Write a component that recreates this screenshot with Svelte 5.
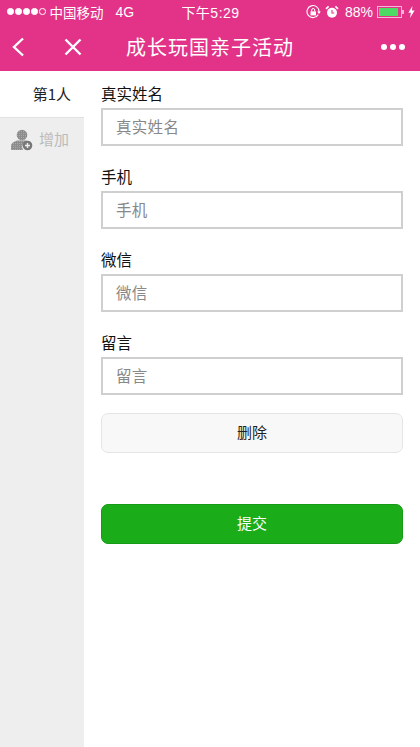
<script>
	let fields = ["真实姓名", "手机", "微信", "留言"];
</script>

<div class="page">
	<header class="top">
		<div class="status">
			<div class="status-left">
				<span class="dots">
					<i></i><i></i><i></i><i></i><i class="off"></i>
				</span>
				<span class="carrier">中国移动</span>
				<span class="net">4G</span>
			</div>
			<div class="clock">下午5:29</div>
			<div class="status-right">
				<svg width="15" height="14" viewBox="0 0 15 14">
					<path d="M12.2 9.6A6 6 0 1 1 13 7" fill="none" stroke="#fff" stroke-width="1.1" />
					<path d="M11.2 6.600h3.600L13 9z" fill="#fff" />
					<rect x="4.500" y="6.400" width="5.500" height="4" fill="#fff" />
					<path d="M5.700 6.400V5a1.500 1.500 0 0 1 3 0v1.400" fill="none" stroke="#fff" stroke-width="1" />
				</svg>
				<svg class="alarm" width="14" height="14" viewBox="0 0 14 14">
					<circle cx="7" cy="7.800" r="5" fill="#fff" />
					<path d="M7 5v3h2.200" fill="none" stroke="#e33389" stroke-width="1.100" />
					<path d="M1 3.800L3.600 1.400M13 3.800L10.400 1.400" stroke="#fff" stroke-width="1.600" />
				</svg>
				<span class="pct">88%</span>
				<span class="battery"><span class="level"></span></span>
				<span class="nub"></span>
				<svg class="bolt" width="7" height="12" viewBox="0 0 7 12">
					<path d="M4.400 0L0.400 6.800h2.500L2 12l4.600-7.400H3.900z" fill="#fff" />
				</svg>
			</div>
		</div>
		<nav class="nav">
			<button class="icon-btn back" aria-label="back">
				<svg width="14" height="20" viewBox="0 0 14 20">
					<path d="M12 1.500L3 10l9 8.500" fill="none" stroke="#fff" stroke-width="2.400" />
				</svg>
			</button>
			<button class="icon-btn close" aria-label="close">
				<svg width="18" height="18" viewBox="0 0 18 18">
					<path d="M1.500 1.500l15 15M16.500 1.500l-15 15" fill="none" stroke="#fff" stroke-width="2.400" />
				</svg>
			</button>
			<h1>成长玩国亲子活动</h1>
			<div class="more"><i></i><i></i><i></i></div>
		</nav>
	</header>

	<main class="body">
		<aside class="side">
			<div class="tab active">第1人</div>
			<div class="tab add">
				<svg width="22" height="22" viewBox="0 0 22 22">
					<defs>
						<pattern id="dither" width="2" height="2" patternUnits="userSpaceOnUse">
							<rect width="2" height="2" fill="#8c8c8c" />
							<rect width="1" height="1" fill="#a8a8a8" />
						</pattern>
					</defs>
					<circle cx="11" cy="6" r="5.300" fill="url(#dither)" />
					<path d="M0 21v-4c0-3 3.500-4.500 6-5.500h9c1 .3 1.800.7 2 1a5.500 5.500 0 0 0-5 8.500z" fill="url(#dither)" />
					<circle cx="16.500" cy="16.500" r="4.800" fill="#777" />
					<path d="M14 16.500h5M16.500 14v5" stroke="#eee" stroke-width="1.400" />
				</svg>
				<span>增加</span>
			</div>
		</aside>

		<section class="form">
			{#each fields as field}
				<label class="field">
					<span class="name">{field}</span>
					<input type="text" placeholder={field} />
				</label>
			{/each}
			<button class="btn del">删除</button>
			<button class="btn submit">提交</button>
		</section>
	</main>
</div>

<style>
	:global(body) {
		margin: 0;
		background: #fff;
	}

	.page {
		width: 420px;
		height: 747px;
		display: flex;
		flex-direction: column;
		overflow: hidden;
		font-family: "Noto Sans CJK SC", "Liberation Sans", sans-serif;
	}

	.top {
		background: #e33389;
		color: #fff;
		height: 71px;
		flex: none;
	}

	.status {
		height: 23px;
		display: grid;
		grid-template-columns: 1fr auto 1fr;
		align-items: center;
		font-size: 14px;
	}

	.status-left {
		display: flex;
		align-items: center;
		padding-left: 7px;
	}

	.dots {
		display: flex;
		gap: 1.500px;
		margin-right: 4px;
	}

	.dots i {
		width: 6.500px;
		height: 6.500px;
		border-radius: 50%;
		background: #fff;
		border: 1px solid #fff;
		box-sizing: border-box;
	}

	.dots i.off {
		background: none;
	}

	.carrier {
		font-size: 13.500px;
	}

	.net {
		font-family: "Liberation Sans", sans-serif;
		font-size: 14px;
		margin-left: 12px;
	}

	.clock {
		font-size: 14px;
		letter-spacing: 0.500px;
		padding-left: 1px;
		font-family: "Liberation Sans", "Noto Sans CJK SC", sans-serif;
	}

	.status-right {
		display: flex;
		align-items: center;
		justify-content: flex-end;
		padding-right: 5px;
	}

	.alarm {
		margin-left: 4px;
	}

	.pct {
		font-family: "Liberation Sans", sans-serif;
		font-size: 14px;
		margin-left: 6px;
	}

	.battery {
		box-sizing: border-box;
		width: 25px;
		height: 12px;
		margin-left: 4px;
		border: 1px solid #f4b7d6;
		padding: 1px;
		display: flex;
	}

	.level {
		width: 92%;
		background: #4cd964;
	}

	.nub {
		width: 2px;
		height: 4px;
		background: #f4b7d6;
	}

	.bolt {
		margin-left: 4px;
	}

	.nav {
		height: 48px;
		display: flex;
		align-items: center;
	}

	.icon-btn {
		background: none;
		border: 0;
		padding: 0;
		display: flex;
		align-items: center;
	}

	.back {
		margin-left: 11px;
	}

	.close {
		margin-left: 39px;
	}

	.nav h1 {
		margin: 0 0 2px 44px;
		font-size: 20px;
		font-weight: 400;
		letter-spacing: 1px;
		white-space: nowrap;
	}

	.more {
		margin-left: auto;
		margin-right: 15px;
		display: flex;
		gap: 3px;
	}

	.more i {
		width: 6px;
		height: 6px;
		border-radius: 50%;
		background: #fff;
	}

	.body {
		flex: 1;
		display: flex;
		min-height: 0;
	}

	.side {
		width: 84px;
		flex: none;
		background: #eee;
		font-size: 15px;
	}

	.tab {
		display: flex;
		align-items: center;
		box-sizing: border-box;
	}

	.tab.active {
		height: 46px;
		padding: 0 13px 2px 0;
		background: #fff;
		color: #222;
		justify-content: flex-end;
	}

	.tab.add {
		height: 44px;
		color: #bbb;
		padding-left: 11px;
		gap: 6px;
		border-top: 1px solid #e2e2e2;
	}

	.tab.add span {
		margin-bottom: 3px;
	}

	.form {
		flex: 1;
		padding: 12px 17px 0;
		display: flex;
		flex-direction: column;
	}

	.field {
		display: block;
		height: 83px;
	}

	.name {
		display: block;
		font-size: 15.500px;
		line-height: 21px;
		color: #111;
	}

	input {
		display: block;
		box-sizing: border-box;
		width: 100%;
		height: 38px;
		margin-top: 4px;
		padding: 0 13px 2px;
		border: 2px solid #cfcfcf;
		border-radius: 0;
		background: #fff;
		font: inherit;
		font-size: 15.500px;
		letter-spacing: 0.300px;
	}

	input::placeholder {
		color: #888;
	}

	.btn {
		display: block;
		box-sizing: border-box;
		width: 100%;
		height: 40px;
		padding: 0 0 3px;
		border-radius: 7px;
		font: inherit;
		font-size: 15px;
	}

	.del {
		margin-top: -2px;
		background: #f8f8f8;
		border: 1.500px solid #e5e5e5;
		color: #222;
	}

	.submit {
		margin-top: 51px;
		background: #1aad19;
		border: 1px solid #179b16;
		color: #fff;
	}
</style>
